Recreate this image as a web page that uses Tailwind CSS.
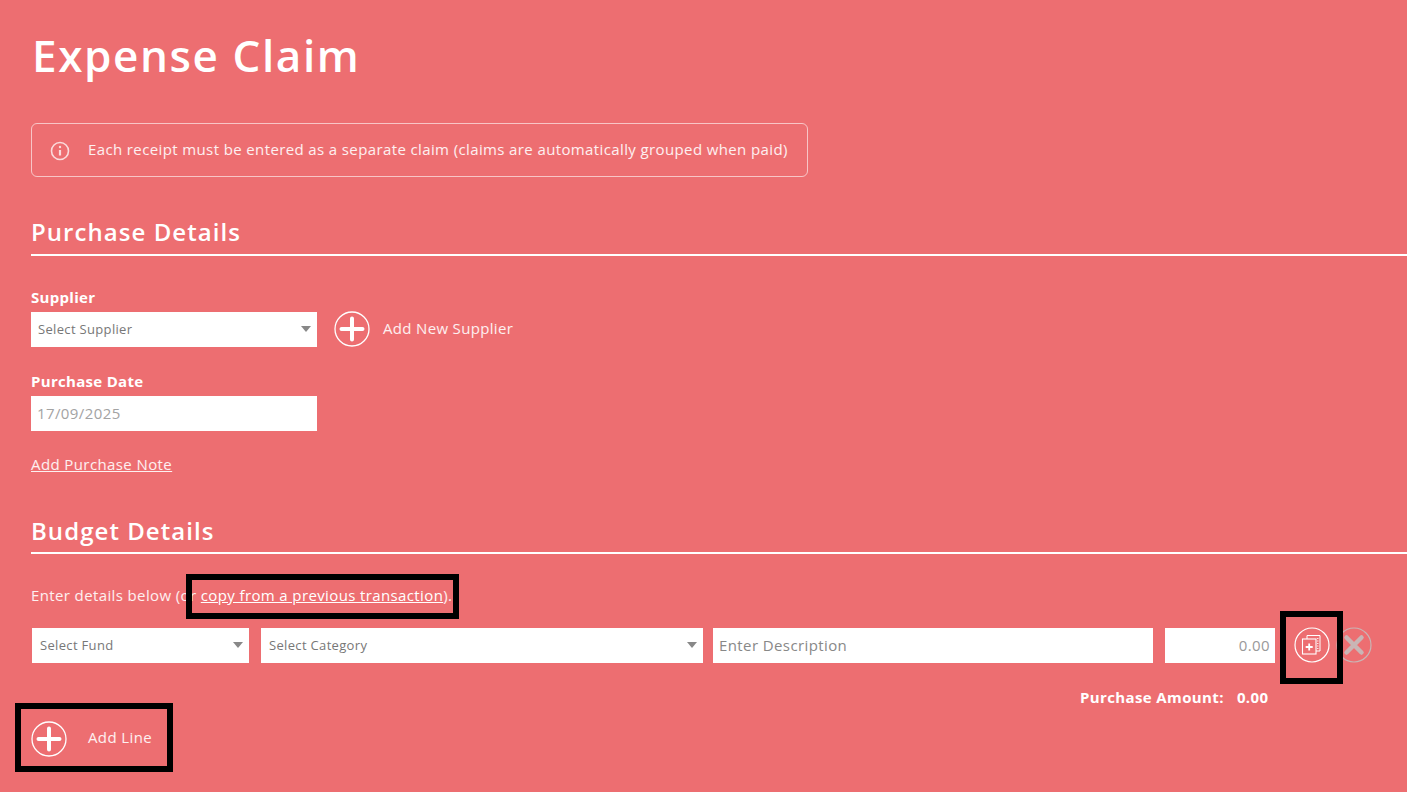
<!DOCTYPE html>
<html lang="en">
<head>
   <meta charset="UTF-8">
   <title>Expense Claim</title>
   <script src="https://cdn.jsdelivr.net/npm/@tailwindcss/browser@4"></script>
</head>
<body class="bg-[#ed6e71] overflow-hidden">
   <div class="relative w-[1407px] h-[792px] pl-[31px] pt-[26px] text-white font-['Open_Sans',sans-serif]">
      <h1 class="text-[44px] leading-[58px] font-semibold tracking-[1.6px] pl-[1px]">Expense Claim</h1>

      <div class="mt-[39px] w-[777px] h-[54px] border border-white/60 rounded-md flex items-center pl-[19px] text-[15px] tracking-[0.38px] text-white/90">
         <svg class="w-[20px] h-[20px] mr-[18px] mt-[2px] -ml-[1px]" viewBox="0 0 20 20" fill="none" stroke="#fff" stroke-opacity="0.75">
            <circle cx="10" cy="10" r="8.500" stroke-width="1.600"/>
            <path d="M10 9v5.500" stroke-width="2.200"/>
            <circle cx="10" cy="6" r="1.200" fill="#fff" fill-opacity="0.75" stroke="none"/>
         </svg>
         <span class="-mt-[2px]">Each receipt must be entered as a separate claim (claims are automatically grouped when paid)</span>
      </div>

      <h2 class="mt-[38px] text-[24px] leading-[33px] font-semibold tracking-[1.05px]">Purchase Details</h2>
      <div class="mt-[6px] h-[2px] bg-white"></div>

      <label class="block mt-[32px] text-[15px] leading-[19px] font-bold tracking-[0.3px]">Supplier</label>
      <div class="mt-[4px] flex items-center">
         <div class="w-[286px] h-[35px] bg-white flex items-center justify-between pl-[7px] pr-[5px] text-[13px] tracking-[0.33px] text-[#777]">
            <span class="pt-[2px]">Select Supplier</span>
            <span class="w-0 h-0 mr-[1px] border-x-[5px] border-x-transparent border-t-[6px] border-t-[#888]"></span>
         </div>
         <svg class="w-[36px] h-[36px] ml-[17px]" viewBox="0 0 36 36" fill="none" stroke="#fff">
            <circle cx="18" cy="18" r="17" stroke-width="1.300"/>
            <path d="M18 7.500v21M7.500 18h21" stroke-width="4" stroke-linecap="round"/>
         </svg>
         <span class="ml-[13px] text-[15px] tracking-[0.33px] text-white/90 -mt-[1px]">Add New Supplier</span>
      </div>

      <label class="block mt-[25px] text-[15px] leading-[19px] font-bold tracking-[0.3px]">Purchase Date</label>
      <div class="mt-[5px] w-[286px] h-[35px] bg-white flex items-center pl-[6px] text-[15px] tracking-[0.4px] text-[#a3a3a3]">17/09/2025</div>

      <a class="block w-fit mt-[23px] text-[15px] leading-[20px] tracking-[0.4px] underline text-white/90">Add Purchase Note</a>

      <h2 class="mt-[40px] text-[24px] leading-[33px] font-semibold tracking-[1.05px]">Budget Details</h2>
      <div class="mt-[5px] h-[2px] bg-white"></div>

      <p class="mt-[31px] text-[15px] leading-[20px] tracking-[0.38px] text-white/90">Enter details below (or <a class="underline text-white">copy from a previous transaction</a>).</p>

      <div class="mt-[22px] flex items-center pl-[1px] text-[13px] tracking-[0.33px]">
         <div class="w-[217px] h-[35px] bg-white flex items-center justify-between pl-[8px] pr-[5px] text-[#777]">
            <span class="pt-[2px]">Select Fund</span>
            <span class="w-0 h-0 mr-[1px] border-x-[5px] border-x-transparent border-t-[6px] border-t-[#888]"></span>
         </div>
         <div class="ml-[12px] w-[442px] h-[35px] bg-white flex items-center justify-between pl-[8px] pr-[5px] text-[#777]">
            <span class="pt-[2px]">Select Category</span>
            <span class="w-0 h-0 mr-[1px] border-x-[5px] border-x-transparent border-t-[6px] border-t-[#888]"></span>
         </div>
         <div class="ml-[10px] w-[440px] h-[35px] bg-white flex items-center pl-[6px] text-[15px] tracking-[0.4px] text-[#888]">Enter Description</div>
         <div class="ml-[12px] w-[110px] h-[35px] bg-white flex items-center justify-end pr-[5px] text-[15px] tracking-[0.4px] text-[#999]">0.00</div>
         <svg class="w-[36px] h-[36px] ml-[19px]" viewBox="0 0 36 36" fill="none" stroke="#fff">
            <circle cx="18" cy="18" r="17" stroke-width="1.200"/>
            <path d="M13 12V8.500h13v15.500h-4" stroke-width="1"/>
            <path d="M23 11.500h1.500M23 14h1.500M23 16.500h1.500M23 19h1.500M23 21.500h1.500" stroke-width="0.800"/>
            <rect x="8.500" y="12" width="13.500" height="15" stroke-width="1.100"/>
            <path d="M15.200 16.500v7M11.700 20h7" stroke-width="1.800"/>
         </svg>
         <svg class="w-[36px] h-[36px] ml-[6px]" viewBox="0 0 36 36" fill="none" stroke="#c9b5b5">
            <circle cx="18" cy="18" r="17" stroke-width="1.200"/>
            <path d="M10.500 10.500l15 15M25.500 10.500l-15 15" stroke-width="4.500" stroke-linecap="round"/>
         </svg>
      </div>

      <div class="mt-[25px] flex pl-[1049px] text-[15px] leading-[19px] font-bold tracking-[0.38px]">
         <span>Purchase Amount:</span>
         <span class="ml-[13px]">0.00</span>
      </div>

      <div class="mt-[14px] flex items-center">
         <svg class="w-[36px] h-[36px]" viewBox="0 0 36 36" fill="none" stroke="#fff">
            <circle cx="18" cy="18" r="17" stroke-width="1.300"/>
            <path d="M18 7.500v21M7.500 18h21" stroke-width="4" stroke-linecap="round"/>
         </svg>
         <span class="ml-[21px] text-[15px] tracking-[0.38px] text-white/90 -mt-[3px]">Add Line</span>
      </div>

      <!-- annotation boxes drawn over the screenshot -->
      <div class="absolute left-[186px] top-[574px] w-[273px] h-[45px] border-[6px] border-black"></div>
      <div class="absolute left-[1280px] top-[611px] w-[63px] h-[73px] border-[6px] border-black"></div>
      <div class="absolute left-[15px] top-[703px] w-[158px] h-[69px] border-[6px] border-black"></div>
   </div>
</body>
</html>
